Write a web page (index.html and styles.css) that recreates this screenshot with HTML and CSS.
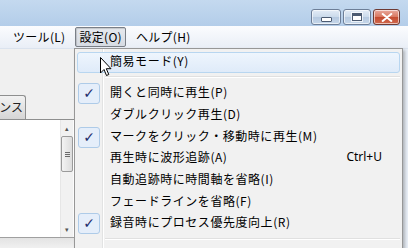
FILE: index.html
```html
<!DOCTYPE html>
<html lang="ja">
  <head>
    <meta charset="UTF-8" />
    <title>設定メニュー</title>
    <link rel="stylesheet" href="styles.css">
  </head>
  <body>
    <div class="window">
      <div class="titlebar">
        <div class="caption">
          <span class="caption__btn caption__min"><i></i></span>
          <span class="caption__btn caption__max"><i></i></span>
          <span class="caption__btn caption__close">
            <svg viewBox="0 0 14 10"><path d="M2 1 L12 9 M12 1 L2 9" stroke="#fff" stroke-width="2.4" stroke-linecap="round"/></svg>
          </span>
        </div>
      </div>
      <div class="menubar">
        <span class="menubar__item">ツール(L)</span>
        <span class="menubar__item menubar__item--open">設定(O)</span>
        <span class="menubar__item">ヘルプ(H)</span>
      </div>
      <div class="client">
        <div class="panel">
          <div class="panel__top"></div>
          <div class="tabs"><span class="tab">ンス</span></div>
          <div class="list">
            <div class="list__body"></div>
            <div class="scroll">
              <span class="scroll__arrow">▴</span>
              <span class="scroll__thumb"><i></i><i></i><i></i></span>
              <span class="scroll__space"></span>
              <span class="scroll__arrow">▾</span>
            </div>
          </div>
          <div class="panel__bottom"></div>
        </div>
        <div class="rest"></div>
      </div>
    </div>

    <div class="menu">
      <div class="menu__item menu__item--hover"><span class="menu__icon"></span><span class="menu__label">簡易モード(Y)</span></div>
      <div class="menu__sep"></div>
      <div class="menu__item"><span class="menu__icon menu__icon--check">✓</span><span class="menu__label">開くと同時に再生(P)</span></div>
      <div class="menu__item"><span class="menu__icon"></span><span class="menu__label">ダブルクリック再生(D)</span></div>
      <div class="menu__item"><span class="menu__icon menu__icon--check">✓</span><span class="menu__label">マークをクリック・移動時に再生(M)</span></div>
      <div class="menu__item"><span class="menu__icon"></span><span class="menu__label">再生時に波形追跡(A)</span><span class="menu__key">Ctrl+U</span></div>
      <div class="menu__item"><span class="menu__icon"></span><span class="menu__label">自動追跡時に時間軸を省略(I)</span></div>
      <div class="menu__item"><span class="menu__icon"></span><span class="menu__label">フェードラインを省略(F)</span></div>
      <div class="menu__item"><span class="menu__icon menu__icon--check">✓</span><span class="menu__label">録音時にプロセス優先度向上(R)</span></div>
      <div class="menu__sep"></div>
      <div class="menu__item"><span class="menu__icon"></span><span class="menu__label">自動調節をリセット(Z)</span></div>
    </div>

    <svg class="cursor" viewBox="0 0 12 20">
      <path d="M0.5 0.5 L0.5 16 L4 12.5 L6.5 18.5 L8.8 17.5 L6.3 11.7 L11 11.7 Z" fill="#fff" stroke="#000" stroke-width="1"/>
    </svg>
  </body>
</html>
```

FILE: styles.css
```css
body {
  margin: 0;
  width: 408px;
  height: 248px;
  overflow: hidden;
  position: relative;
  background: #f0f0f0;
  font-family: "Noto Sans CJK JP", "Liberation Sans", sans-serif;
  font-size: 12px;
  color: #000;
}

.window {
  display: flex;
  flex-direction: column;
  height: 248px;
}

.titlebar {
  height: 26px;
  flex: none;
  background: linear-gradient(#c4d9ef, #b3cde9);
  display: flex;
  justify-content: flex-end;
}

.caption {
  display: flex;
  gap: 2px;
  padding: 9px 8px 0 0;
}
.caption__btn {
  box-sizing: border-box;
  height: 16px;
  border: 1px solid #6d7e97;
  border-radius: 3px;
  background: linear-gradient(#e3ecf6 0%, #cbdaeb 50%, #b5c9e0 51%, #c6d7ea 100%);
  display: flex;
  align-items: center;
  justify-content: center;
  box-shadow: inset 0 0 0 1px rgba(255, 255, 255, 0.6);
}
.caption__min {
  width: 30px;
}
.caption__min i {
  width: 9px;
  height: 3px;
  margin-top: 4px;
  background: #fff;
  border: 1px solid #4c5b72;
  border-radius: 1px;
}
.caption__max {
  width: 28px;
}
.caption__max i {
  box-sizing: border-box;
  width: 10px;
  height: 8px;
  border: 1px solid #4c5b72;
  border-top-width: 3px;
  background: #fff;
  outline: 1px solid rgba(255, 255, 255, 0.7);
}
.caption__close {
  width: 27px;
  border-color: #6e3a33;
  background: linear-gradient(#e9a99d 0%, #d8775f 50%, #c44a2f 51%, #d06a4e 100%);
}
.caption__close svg {
  width: 12px;
  height: 9px;
}

.menubar {
  height: 23px;
  flex: none;
  box-sizing: border-box;
  background: linear-gradient(#fbfcfe, #e9eef6);
  border-bottom: 1px solid #dbe3ee;
  display: flex;
  align-items: center;
  padding-left: 8px;
  gap: 2px;
}
.menubar__item {
  box-sizing: border-box;
  height: 20px;
  line-height: 17px;
  padding: 0 4px;
  border: 1px solid transparent;
  white-space: nowrap;
  letter-spacing: 0.3px;
}
.menubar__item--open {
  border-color: #7a7f87;
  border-radius: 2px;
  background: linear-gradient(#e6e9ee, #d6dbe3);
  box-shadow: inset 1px 1px 1px rgba(0, 0, 0, 0.15);
  margin-left: 3px;
  margin-right: 3px;
  padding: 0 3px;
}

.client {
  flex: 1;
  display: flex;
  background: #f0f0f0;
}

.panel {
  width: 74px;
  display: flex;
  flex-direction: column;
}
.panel__top {
  height: 46px;
}
.tabs {
  height: 24px;
  border-bottom: 1px solid #8e8f8f;
  display: flex;
}
.tab {
  box-sizing: border-box;
  width: 26px;
  height: 24px;
  line-height: 22px;
  text-align: right;
  padding-right: 2px;
  overflow: hidden;
  white-space: nowrap;
  direction: rtl;
  border: 1px solid #8e8f8f;
  border-left: none;
  border-bottom: none;
  border-radius: 0 3px 0 0;
  background: linear-gradient(#f2f2f2, #d5d5d5);
  color: #222;
}
.list {
  height: 117px;
  display: flex;
  background: #fff;
  border-bottom: 1px solid #a0a0a0;
}
.list__body {
  flex: 1;
}
.scroll {
  width: 12px;
  margin-right: 1px;
  display: flex;
  flex-direction: column;
  background: #f1f1f1;
  border-left: 1px solid #e6e6e6;
}
.scroll__arrow {
  height: 16px;
  font-size: 7px;
  line-height: 16px;
  text-align: center;
  color: #555;
}
.scroll__thumb {
  box-sizing: border-box;
  height: 36px;
  border: 1px solid #9a9a9a;
  border-radius: 2px;
  background: linear-gradient(90deg, #f3f3f3, #dcdcdc);
  display: flex;
  flex-direction: column;
  justify-content: center;
  align-items: center;
  gap: 1px;
}
.scroll__thumb i {
  width: 5px;
  height: 1px;
  background: #6a6a6a;
}
.scroll__space {
  flex: 1;
}
.panel__bottom {
  flex: 1;
  background: linear-gradient(#e3e3e3, #f0f0f0);
}
.rest {
  flex: 1;
  background: #e9eff7;
}

.menu {
  position: absolute;
  left: 74px;
  top: 48px;
  width: 329px;
  height: 220px;
  box-sizing: border-box;
  padding: 2px;
  border: 1px solid #979797;
  background: linear-gradient(90deg, #f1f1f1 0 27px, #e2e3e3 27px 28px, #fff 28px 29px, #f1f1f1 29px);
  box-shadow: 2px 2px 3px rgba(0, 0, 0, 0.25);
}
.menu__item {
  box-sizing: border-box;
  height: 21.7px;
  display: flex;
  align-items: center;
  border: 1px solid transparent;
  border-radius: 3px;
  white-space: nowrap;
}
.menu__item--hover {
  height: 21px;
  margin-top: 1px;
  border-color: #b8d6f0;
  background: linear-gradient(#eef5fd, #dfebf9);
}
.menu__icon {
  box-sizing: border-box;
  width: 22px;
  height: 21px;
  margin-right: 10px;
  flex: none;
}
.menu__icon--check {
  border: 1px solid #aecbe8;
  border-radius: 3px;
  background: #e5eefa;
  color: #1f2d6e;
  font-family: "DejaVu Sans", sans-serif;
  font-size: 14px;
  font-weight: bold;
  line-height: 19px;
  text-align: center;
}
.menu__label {
  flex: 1;
  line-height: 1;
  padding-bottom: 3px;
  letter-spacing: 0.55px;
}
.menu__key {
  font-family: "Noto Sans", "Liberation Sans", sans-serif;
  font-size: 12px;
  line-height: 1;
  padding-bottom: 3px;
  margin-right: 17px;
}
.menu__sep {
  height: 1px;
  margin: 3px 0 5px 28px;
  background: #e0e0e0;
  border-bottom: 1px solid #fff;
}

.cursor {
  position: absolute;
  left: 100px;
  top: 57px;
  width: 12px;
  height: 20px;
}
```
